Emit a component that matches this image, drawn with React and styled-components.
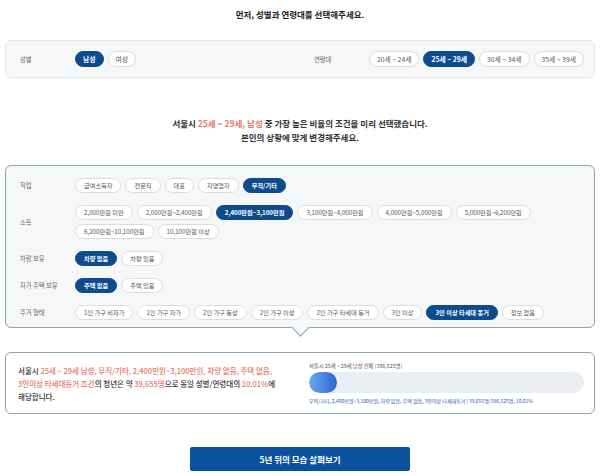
import React from "react";
import styled, { createGlobalStyle } from "styled-components";

const GlobalStyle = createGlobalStyle`
	body {
		margin: 0;
		overflow: hidden;
		background: #ffffff;
		font-family: "Noto Sans CJK KR", "Noto Sans", sans-serif;
		color: #222;
	}
`;

const Page = styled.div`
	width: 600px;
	padding: 0 5px;
	box-sizing: border-box;
`;

const Title = styled.h1`
	margin: 0;
	padding-top: 7px;
	font-size: 8.5px;
	line-height: 14px;
	font-weight: 700;
	text-align: center;
	color: #222;
`;

const BasePanel = styled.div`
	margin-top: 19px;
	height: 38px;
	display: flex;
	align-items: center;
	background: #f6f7f9;
	border: 1px solid #e2e5e9;
	border-radius: 6px;
	box-sizing: border-box;
`;

const BaseGroup = styled.div`
	flex: 1;
	display: flex;
	align-items: center;
	padding-left: 14px;
`;

const Label = styled.div`
	width: 55px;
	flex-shrink: 0;
	font-size: 6.3px;
	color: #666;
`;

const PillList = styled.div`
	display: flex;
	flex-wrap: wrap;
	gap: 4px;
	max-width: 500px;
`;

const Pill = styled.span`
	display: inline-flex;
	align-items: center;
	justify-content: center;
	height: ${(p) => (p.$big ? 16 : 15)}px;
	padding: 0 ${(p) => (p.$big ? 7 : 8)}px;
	box-sizing: border-box;
	border-radius: 8px;
	border: 1px solid ${(p) => (p.$on ? "#0c4b8e" : "#d9dde2")};
	background: ${(p) => (p.$on ? "#0c4b8e" : "#ffffff")};
	color: ${(p) => (p.$on ? "#ffffff" : "#555")};
	font-size: ${(p) => (p.$big ? 6.8 : 6.2)}px;
	font-weight: ${(p) => (p.$on ? 700 : 400)};
	white-space: nowrap;
`;

const Notice = styled.p`
	margin: 38px 0 0;
	font-size: 8.5px;
	line-height: 14px;
	font-weight: 700;
	text-align: center;
	color: #333;
`;

const Hi = styled.span`
	color: #e67766;
`;

const OptionPanel = styled.div`
	position: relative;
	margin-top: 21px;
	padding: 12px 14px 7px;
	display: flex;
	flex-direction: column;
	gap: 12px;
	background: #f6f7f9;
	border: 1px solid #8ea4ae;
	border-radius: 6px;

	&::after {
		content: "";
		position: absolute;
		left: 50%;
		bottom: -7px;
		width: 12px;
		height: 12px;
		margin-left: -6px;
		background: #f6f7f9;
		border-right: 1px solid #8ea4ae;
		border-bottom: 1px solid #8ea4ae;
		transform: rotate(45deg);
	}
`;

const Row = styled.div`
	display: flex;
	align-items: center;
`;

const ResultPanel = styled.div`
	margin-top: 24px;
	height: 62px;
	box-sizing: border-box;
	padding: 0 10px 0 12px;
	display: grid;
	grid-template-columns: 1fr 275px;
	gap: 10px;
	align-items: center;
	background: #ffffff;
	border: 1px solid #8ea4ae;
	border-radius: 6px;
`;

const Summary = styled.p`
	margin: 0;
	font-size: 7.5px;
	line-height: 13px;
	font-weight: 500;
	color: #333;
	white-space: nowrap;
`;

const Chart = styled.div`
	display: flex;
	flex-direction: column;
`;

const ChartLabel = styled.div`
	font-size: 5.3px;
	line-height: 8px;
	color: #555;
`;

const Track = styled.div`
	margin-top: 2px;
	height: 21px;
	border-radius: 11px;
	background: #eaedf1;
	overflow: hidden;
`;

const Fill = styled.div`
	height: 100%;
	border-radius: 11px;
	background: linear-gradient(90deg, #6aa9f3, #2d66cc);
`;

const ChartNote = styled.div`
	margin-top: 4px;
	font-size: 5px;
	line-height: 8px;
	color: #2b56a3;
	white-space: nowrap;
`;

const ActionButton = styled.button`
	display: block;
	margin: 33px auto 0;
	width: 220px;
	height: 24px;
	border: 0;
	border-radius: 2px;
	background: #0a52a0;
	color: #ffffff;
	font-family: inherit;
	font-size: 8.5px;
	font-weight: 700;
`;

const genders = ["남성", "여성"];
const ages = ["20세 ~ 24세", "25세 ~ 29세", "30세 ~ 34세", "35세 ~ 39세"];

const options = [
	{ label: "직업", items: ["급여소득자", "전문직", "대표", "자영업자", "무직/기타"], on: "무직/기타" },
	{
		label: "소득",
		items: [
			"2,000만원 미만",
			"2,000만원~2,400만원",
			"2,400만원~3,100만원",
			"3,100만원~4,000만원",
			"4,000만원~5,000만원",
			"5,000만원~6,200만원",
			"6,200만원~10,100만원",
			"10,100만원 이상",
		],
		on: "2,400만원~3,100만원",
	},
	{ label: "차량 보유", items: ["차량 없음", "차량 있음"], on: "차량 없음" },
	{ label: "자가 주택 보유", items: ["주택 없음", "주택 있음"], on: "주택 없음" },
	{
		label: "주거 형태",
		items: [
			"1인 가구 비자가",
			"1인 가구 자가",
			"2인 가구 동성",
			"2인 가구 이성",
			"2인 가구 타세대 동거",
			"3인 이상",
			"3인 이상 타세대 동거",
			"정보 없음",
		],
		on: "3인 이상 타세대 동거",
	},
];

const ratio = 10.01;

function App() {
	return (
		<Page>
			<GlobalStyle />
			<Title>먼저, 성별과 연령대를 선택해주세요.</Title>

			<BasePanel>
				<BaseGroup>
					<Label>성별</Label>
					<PillList>
						{genders.map((g) => (
							<Pill key={g} $big $on={g === "남성"}>
								{g}
							</Pill>
						))}
					</PillList>
				</BaseGroup>
				<BaseGroup>
					<Label>연령대</Label>
					<PillList>
						{ages.map((a) => (
							<Pill key={a} $big $on={a === "25세 ~ 29세"}>
								{a}
							</Pill>
						))}
					</PillList>
				</BaseGroup>
			</BasePanel>

			<Notice>
				서울시 <Hi>25세 ~ 29세, 남성</Hi> 중 가장 높은 비율의 조건을 미리 선택했습니다.
				<br />
				본인의 상황에 맞게 변경해주세요.
			</Notice>

			<OptionPanel>
				{options.map((o) => (
					<Row key={o.label}>
						<Label>{o.label}</Label>
						<PillList>
							{o.items.map((it) => (
								<Pill key={it} $on={it === o.on}>
									{it}
								</Pill>
							))}
						</PillList>
					</Row>
				))}
			</OptionPanel>

			<ResultPanel>
				<Summary>
					서울시 <Hi>25세 ~ 29세 남성, 무직/기타, 2,400만원~3,100만원, 차량 없음, 주택 없음,</Hi>
					<br />
					<Hi>3인이상 타세대동거 조건</Hi>의 청년은 약 <Hi>39,655명</Hi>으로 동일 성별/연령대의{" "}
					<Hi>10.01%</Hi>에
					<br />
					해당합니다.
				</Summary>
				<Chart>
					<ChartLabel>서울시 25세 ~ 29세 남성 전체 (396,525명)</ChartLabel>
					<Track>
						<Fill style={{ width: `${ratio}%` }} />
					</Track>
					<ChartNote>
						무직/기타, 2,400만원~3,100만원, 차량 없음, 주택 없음, 3인이상 타세대동거 | 39,655명/396,525명, 10.01%
					</ChartNote>
				</Chart>
			</ResultPanel>

			<ActionButton>5년 뒤의 모습 살펴보기</ActionButton>
		</Page>
	);
}

export default App;
